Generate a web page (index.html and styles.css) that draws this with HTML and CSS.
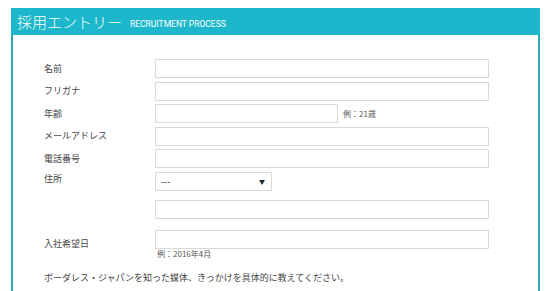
FILE: index.html
```html
<!DOCTYPE html>
<html>
<head>
  <meta charset="UTF-8">
  <title>採用エントリー</title>
  <link rel="stylesheet" href="styles.css">
</head>
<body>
  <div class="entry-panel">
    <div class="entry-header">
      <span class="title">採用エントリー</span>
      <span class="subtitle">RECRUITMENT PROCESS</span>
    </div>
    <div class="entry-form">
      <div class="row">
        <label>名前</label>
        <input type="text">
      </div>
      <div class="row">
        <label>フリガナ</label>
        <input type="text">
      </div>
      <div class="row">
        <label>年齢</label>
        <div class="inline">
          <input type="text" class="short">
          <span class="hint">例：21歳</span>
        </div>
      </div>
      <div class="row">
        <label>メールアドレス</label>
        <input type="text">
      </div>
      <div class="row">
        <label>電話番号</label>
        <input type="text">
      </div>
      <div class="row top">
        <label>住所</label>
        <div class="select">
          <span>---</span>
          <span class="arrow">▼</span>
        </div>
      </div>
      <div class="row spaced">
        <label></label>
        <input type="text">
      </div>
      <div class="row spaced bottom">
        <label>入社希望日</label>
        <div>
          <input type="text">
          <div class="hint below">例：2016年4月</div>
        </div>
      </div>
      <p class="question">ボーダレス・ジャパンを知った媒体、きっかけを具体的に教えてください。</p>
    </div>
  </div>
</body>
</html>
```

FILE: styles.css
```css
body {
  margin: 0;
  padding: 8px 10px 0 11px;
  font-family: "Noto Sans CJK JP", "Liberation Sans", sans-serif;
  color: #333;
  background: #fff;
  overflow: hidden;
}
.entry-panel {
  width: 529px;
  height: calc(100vh - 8px);
  box-sizing: border-box;
  border: 2px solid #2aaabb;
  border-top: none;
  border-bottom: none;
}
.entry-header {
  height: 27px;
  margin: 0 -2px;
  padding-left: 6px;
  background-color: #1cb7cb;
  color: #fff;
  display: flex;
  align-items: center;
}
.entry-header .title {
  font-size: 15px;
  font-weight: 300;
}
.entry-header .subtitle {
  font-family: "Roboto", "Liberation Sans", sans-serif;
  font-size: 8.5px;
  margin-left: 8px;
  margin-top: 4px;
}
.entry-form {
  padding: 24px 0 0 31px;
}
.row {
  display: grid;
  grid-template-columns: 111px 334px;
  align-items: center;
  margin-bottom: 3.6px;
}
.row.top {
  align-items: start;
}
.row.spaced {
  margin-top: 9.4px;
}
.row.bottom {
  align-items: start;
  margin-top: 10.4px;
}
.row.bottom label {
  margin-top: 7px;
}
label {
  font-size: 9px;
  line-height: 14px;
  color: #444;
}
input {
  display: block;
  width: 334px;
  height: 19px;
  box-sizing: border-box;
  border: 1px solid #d9d9d9;
  border-radius: 0;
  padding: 2px 4px;
  margin: 0;
  font-family: inherit;
}
input.short {
  width: 183px;
}
.inline {
  display: flex;
  align-items: center;
}
.hint {
  font-size: 8px;
  color: #555;
  margin-left: 5px;
}
.hint.below {
  margin-left: 2px;
  line-height: 10px;
}
.select {
  width: 117px;
  height: 19px;
  box-sizing: border-box;
  border: 1px solid #d9d9d9;
  display: flex;
  align-items: center;
  justify-content: space-between;
  padding: 0 6px 0 5px;
  font-size: 9px;
  color: #222;
}
.select .arrow {
  font-size: 6px;
}
.question {
  font-size: 9px;
  color: #444;
  margin: 12px 0 0;
}
```
